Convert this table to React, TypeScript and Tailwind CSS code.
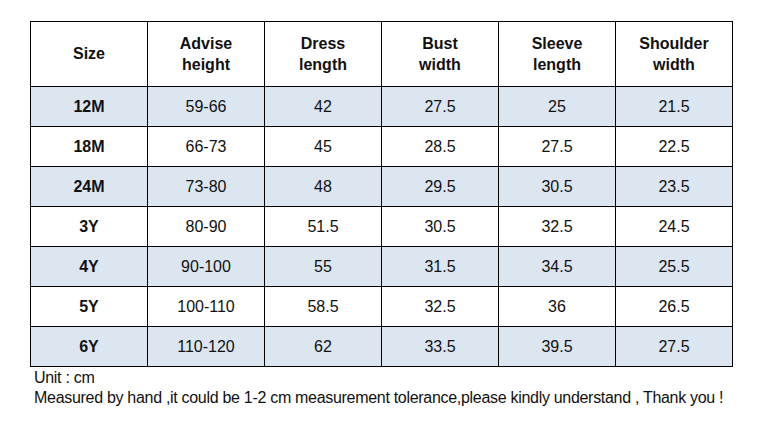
const headers = ["Size", "Advise\nheight", "Dress\nlength", "Bust\nwidth", "Sleeve\nlength", "Shoulder\nwidth"];

const rows = [
  ["12M", "59-66", "42", "27.5", "25", "21.5"],
  ["18M", "66-73", "45", "28.5", "27.5", "22.5"],
  ["24M", "73-80", "48", "29.5", "30.5", "23.5"],
  ["3Y", "80-90", "51.5", "30.5", "32.5", "24.5"],
  ["4Y", "90-100", "55", "31.5", "34.5", "25.5"],
  ["5Y", "100-110", "58.5", "32.5", "36", "26.5"],
  ["6Y", "110-120", "62", "33.5", "39.5", "27.5"],
];

const App = () => {
  return (
    <div className="w-[773px] h-[426px] bg-white text-[#111] font-['Liberation_Sans',Arial,sans-serif] pt-[21px] pl-[30px]">
      <table className="border-collapse">
        <thead>
          <tr className="h-[65px]">
            {headers.map((h) => (
              <th key={h} className="w-[117px] border border-black text-[16px] leading-[21px] font-bold whitespace-pre-line p-0 pb-[1px]">
                {h}
              </th>
            ))}
          </tr>
        </thead>
        <tbody>
          {rows.map((r, i) => (
            <tr key={r[0]} className={i % 2 === 0 ? "h-[40px] bg-[#dce6f1]" : "h-[40px] bg-white"}>
              {r.map((c, j) => (
                <td key={j} className={j === 0 ? "border border-black text-center text-[16px] font-bold p-0" : "border border-black text-center text-[16px] p-0"}>
                  {c}
                </td>
              ))}
            </tr>
          ))}
        </tbody>
      </table>
      <div className="pl-[4px] text-[16px] leading-[20px] tracking-[-0.3px] pt-[1px]">
        <p>Unit : cm</p>
        <p>Measured by hand ,it could be 1-2 cm measurement tolerance,please kindly understand , Thank you !</p>
      </div>
    </div>
  );
};

export default App;
